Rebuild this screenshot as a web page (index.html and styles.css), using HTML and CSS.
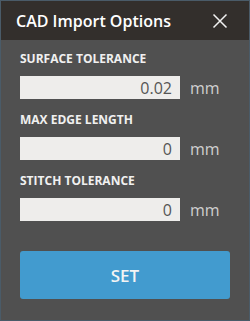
FILE: index.html
```html
<!DOCTYPE html>
<html lang="en">
<head>
  <meta charset="UTF-8" />
  <title>CAD Import Options</title>
  <link rel="stylesheet" href="styles.css">
</head>
<body>
  <div class="dialog">
    <header class="dialog-header">
      <h1>CAD Import Options</h1>
      <button class="close" aria-label="Close">
        <svg width="16" height="16" viewBox="0 0 16 16">
          <path d="M1.5 1.5 L14.5 14.5 M14.5 1.5 L1.5 14.5" stroke="#f2f2f2" stroke-width="1.5" fill="none" />
        </svg>
      </button>
    </header>

    <div class="dialog-body">
      <label class="field-label" for="surface">SURFACE TOLERANCE</label>
      <div class="field">
        <input type="text" id="surface" value="0.02" />
        <span class="unit">mm</span>
      </div>

      <label class="field-label" for="edge">MAX EDGE LENGTH</label>
      <div class="field">
        <input type="text" id="edge" value="0" />
        <span class="unit">mm</span>
      </div>

      <label class="field-label" for="stitch">STITCH TOLERANCE</label>
      <div class="field">
        <input type="text" id="stitch" value="0" />
        <span class="unit">mm</span>
      </div>

      <button class="set-btn">SET</button>
    </div>
  </div>
</body>
</html>
```

FILE: styles.css
```css
body {
  margin: 0;
  padding: 0;
  font-family: 'Open Sans', 'Noto Sans', sans-serif;
  background: #505050;
}

.dialog {
  width: 250px;
  height: 321px;
  box-sizing: border-box;
  border: 1px solid #4a5b68;
  background: #505050;
  display: flex;
  flex-direction: column;
}

.dialog-header {
  height: 39px;
  background: #332f2c;
  display: flex;
  align-items: center;
  justify-content: space-between;
  padding: 0 21px 0 15px;
}

.dialog-header h1 {
  margin: 0;
  font-size: 16px;
  font-weight: 600;
  color: #ffffff;
}

.close {
  background: none;
  border: none;
  padding: 0;
  width: 16px;
  height: 16px;
  cursor: pointer;
}

.close svg {
  display: block;
}

.dialog-body {
  padding: 10px 19px 0 19px;
  display: flex;
  flex-direction: column;
}

.field-label {
  display: block;
  font-size: 12px;
  font-weight: 700;
  color: #f0f0f0;
  height: 17px;
  line-height: 17px;
  margin-bottom: 9px;
}

.field {
  display: flex;
  align-items: center;
  margin-bottom: 12px;
}

.field input {
  width: 160px;
  height: 23px;
  box-sizing: border-box;
  border: none;
  background: #eeedeb;
  color: #555;
  text-align: right;
  padding: 0 8px 0 0;
  font-family: 'Open Sans', 'Noto Sans', sans-serif;
  font-size: 16px;
  margin: 0;
}

.unit {
  margin-left: 10px;
  font-size: 16px;
  color: #cfcfcf;
}

.set-btn {
  margin-top: 18px;
  height: 48px;
  width: 210px;
  border: none;
  border-radius: 3px;
  background: #429bcf;
  color: #f4f4f4;
  font-family: 'Open Sans', 'Noto Sans', sans-serif;
  font-size: 17px;
  font-weight: 600;
  cursor: pointer;
}
```
